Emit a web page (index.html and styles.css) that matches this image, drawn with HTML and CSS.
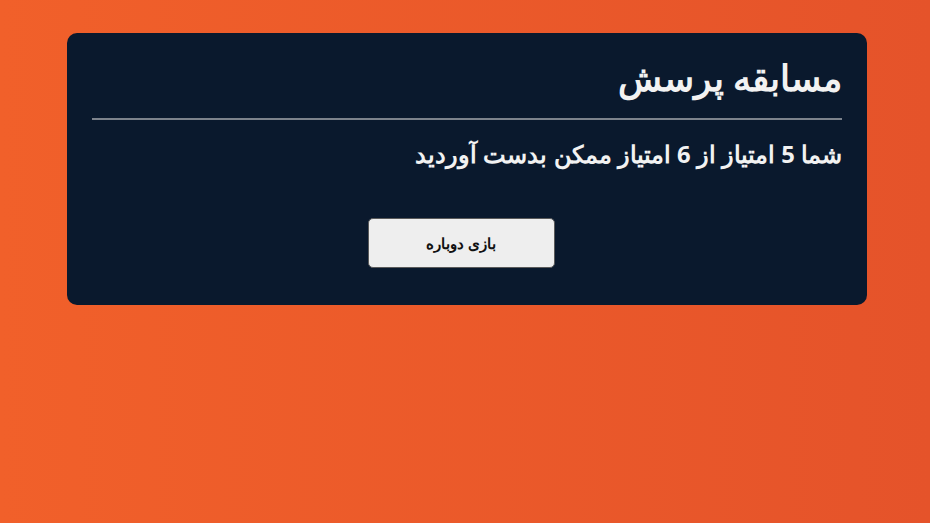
FILE: index.html
```html
<!DOCTYPE html>
<html lang="fa" dir="rtl">
<head>
<meta charset="utf-8">
<link rel="stylesheet" href="styles.css">
</head>
<body>
<div class="page">
  <div class="card">
    <h1 class="title">مسابقه پرسش</h1>
    <hr class="divider">
    <p class="score">شما 5 امتیاز از 6 امتیاز ممکن بدست آوردید</p>
    <div class="actions">
      <button class="btn">بازی دوباره</button>
    </div>
  </div>
</div>
</body>
</html>
```
FILE: styles.css
```css
html, body {
  margin: 0;
  height: 100%;
}
body {
  background: linear-gradient(to right, #f1602a, #e5532a);
  font-family: "Noto Sans", sans-serif;
}
.page {
  padding: 33px 63px 0 67px;
}
.card {
  width: 800px;
  box-sizing: border-box;
  background: #0a192d;
  border-radius: 10px;
  padding: 14px 25px 37px 25px;
  color: #f2f2f2;
}
.title {
  margin: 0;
  font-size: 35.5px;
  font-weight: bold;
  line-height: 60px;
}
.divider {
  border: none;
  height: 2px;
  background: #7d838c;
  margin: 11px 0 0 0;
}
.score {
  margin: 18px 0 0 0;
  font-size: 23.8px;
  font-weight: bold;
  line-height: 32px;
}
.actions {
  display: flex;
  justify-content: center;
  margin-top: 48px;
  padding-right: 12px;
}
.btn {
  width: 187px;
  height: 50px;
  background: #eeeeee;
  border: 1px solid #5a5a5a;
  border-radius: 5px;
  font-family: "Noto Sans", sans-serif;
  font-size: 15px;
  font-weight: bold;
  color: #111;
}
```
